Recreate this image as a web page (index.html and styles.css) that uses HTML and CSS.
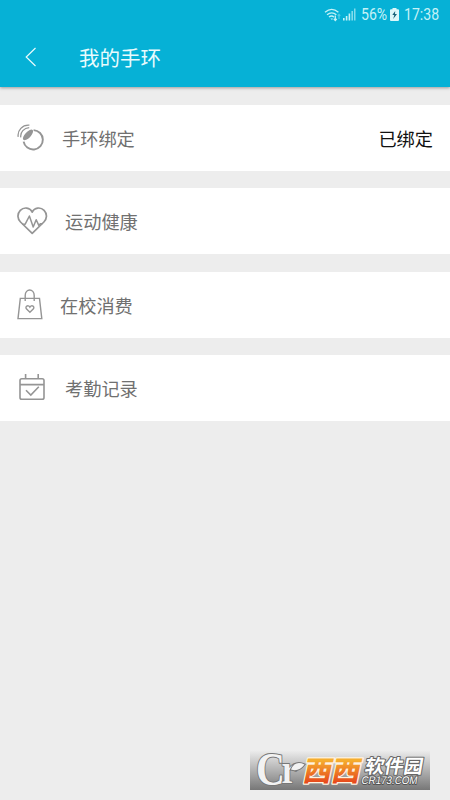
FILE: index.html
```html
<!DOCTYPE html>
<html lang="zh-CN">
<head>
<meta charset="utf-8">
<title>我的手环</title>
<link rel="stylesheet" href="styles.css">
</head>
<body>
<header class="header">
  <div class="status">
    <svg class="wifi" width="19" height="14" viewBox="0 0 19 14" fill="none" stroke="currentColor" stroke-width="1.3">
      <path d="M1 4.3Q7.7-1.5 14.4 4.3M3 6.8Q7.7 2.8 12.4 6.8M5 9.1Q7.7 6.9 10 9.1"/>
      <path d="M6.4 10.4L8 12l1-1.5z" fill="currentColor" stroke="none"/>
      <path d="M11.3 7.5v5M9.8 10.9l1.5 1.6 1.5-1.6"/>
      <path d="M15 11V6.5M13.7 7.8L15 6.5l1.3 1.3" opacity=".4"/>
    </svg>
    <svg class="signal" width="13" height="13" viewBox="0 0 13 13" fill="currentColor">
      <path d="M0 10h1.6v2.5H0zM2.8 8h1.6v4.5H2.8zM5.6 5.6h1.6v6.9H5.6z"/>
      <path d="M8.4 3H10v9.5H8.4zM11 .5h1.5v12H11z" opacity=".65"/>
    </svg>
    <span class="percent">56%</span>
    <svg class="battery" width="9" height="13" viewBox="0 0 9 13">
      <path d="M2.5 0h4v1.2H8q1 0 1 1V12q0 1-1 1H1q-1 0-1-1V2.2q0-1 1-1h1.5z" fill="#dcf7fa"/>
      <path d="M5.2 3L2.3 7h2L3.2 11 7 6H5z" fill="#17627a"/>
    </svg>
    <span class="time">17:38</span>
  </div>
  <div class="titlebar">
    <svg class="back" width="12" height="20" viewBox="0 0 12 20" fill="none" stroke="currentColor" stroke-width="1.2"><path d="M10.5 1L1.2 10l9.3 9"/></svg>
    <h1 class="title">我的手环</h1>
  </div>
</header>
<main class="list">
  <div class="row">
    <svg class="icon icon-band" width="28" height="28" viewBox="0 0 28 28" fill="none" stroke="currentColor">
      <path d="M16.6 6.1A9.7 9.7 0 1 1 6.6 17.6" stroke-width="1.9"/>
      <ellipse cx="11" cy="10.9" rx="2.9" ry="6.8" transform="rotate(43 11 10.9)" fill="currentColor" stroke="none"/>
      <path d="M1.2 12.8C.2 6.3 5.5.6 12.4 1.2M3.8 13.4C3 8 7.2 4 12.2 3.7" stroke-width="1.3"/>
    </svg>
    <span class="label">手环绑定</span>
    <span class="value">已绑定</span>
  </div>
  <div class="row">
    <svg class="icon icon-heart" width="31" height="28" viewBox="0 0 31 28" fill="none" stroke="currentColor" stroke-width="1.7" stroke-linejoin="round">
      <path d="M15.2 5.2C13 .2 6.8-.2 3.3 3.3-.2 7 .5 12 3.5 15L15.2 26.3 26.9 15C29.9 12 30.6 7 27.1 3.3 23.6-.2 17.4.2 15.2 5.2z"/>
      <path d="M5 17.2h3.2L12.4 9l3.8 11 3-7.2 2.6 5.6 1.6-1.6h2" stroke-width="1.5"/>
    </svg>
    <span class="label">运动健康</span>
  </div>
  <div class="row">
    <svg class="icon icon-bag" width="26" height="31" viewBox="0 0 26 31" fill="none" stroke="currentColor" stroke-width="1.4">
      <path d="M3.3 9.4h19.2l2.3 20.2H1z"/>
      <path d="M8.2 12V6.5C8.2-.8 17.2-.8 17.2 6.5V12"/>
      <path d="M12.9 23.2l-3.3-3.1c-2.1-2.4 1.5-5 3.3-2 1.8-3 5.4-.4 3.3 2z"/>
    </svg>
    <span class="label">在校消费</span>
  </div>
  <div class="row">
    <svg class="icon icon-calendar" width="27" height="27" viewBox="0 0 27 27" fill="none" stroke="currentColor" stroke-width="1.6">
      <rect x="1" y="4.7" width="24" height="20.6" rx="1.8"/>
      <path d="M1 10.6h24M6.6 0v4.7M19.2 0v4.7M7 16.3l4.8 4.7 8-8.2"/>
    </svg>
    <span class="label">考勤记录</span>
  </div>
</main>
<div class="watermark">
  <svg width="180" height="40" viewBox="0 0 180 40">
    <defs>
      <linearGradient id="orange" x1="0" y1="0" x2="0" y2="1"><stop offset=".3" stop-color="#f5ad2e"/><stop offset=".85" stop-color="#e6471b"/></linearGradient>
    </defs>
    <text class="mark" transform="translate(6 34.5) scale(.87 1)">C<tspan class="mark-r" dx="-4" dy="-1.5">r</tspan></text>
    <path class="leaf" d="M41 19.5Q45 10 54.5 14.5Q49 22 41 19.5z"/>
    <text class="brand" transform="translate(52 31) skewX(-12)" textLength="57" lengthAdjust="spacingAndGlyphs" fill="url(#orange)">西西</text>
    <text class="name" transform="translate(114 22.5) skewX(-10)" textLength="58" lengthAdjust="spacingAndGlyphs">软件园</text>
    <text class="site" transform="translate(111 33.5) skewX(-10)" textLength="56" lengthAdjust="spacingAndGlyphs">CR173.COM</text>
  </svg>
</div>
</body>
</html>
```
FILE: styles.css
```css
* { box-sizing: border-box; }
body {
  margin: 0;
  height: 800px;
  position: relative;
  overflow: hidden;
  background: #ededed;
  font-family: "Noto Sans CJK SC", sans-serif;
}
.header {
  height: 87px;
  background: #06b1d6;
  color: #e9fbfd;
  box-shadow: 0 1px 3px rgba(0, 0, 0, .35);
}
.status {
  height: 29px;
  padding-right: 11px;
  display: flex;
  align-items: center;
  justify-content: flex-end;
  font: 16px/29px Roboto, sans-serif;
  color: #c5f2f7;
}
.signal { margin-right: 5px; }
.percent { width: 26px; display: flex; transform: scaleX(.88); transform-origin: left; }
.battery { margin: 0 5px 0 3px; }
.time { width: 35px; transform: scaleX(.88); transform-origin: left; }
.titlebar {
  height: 55px;
  padding-left: 25px;
  display: flex;
  align-items: center;
}
.title {
  margin: 0 0 0 42px;
  font-size: 20.5px;
  line-height: 30px;
  font-weight: 400;
}
.list {
  padding-top: 18px;
  display: grid;
  grid-auto-rows: 66px;
  gap: 17.3px;
}
.row {
  padding: 0 17px;
  display: flex;
  align-items: center;
  background: #fff;
}
.icon { color: #959595; flex: none; }
.label { color: #707070; font-size: 18.2px; line-height: 28px; }
.value { margin-left: auto; color: #111; font-size: 18.2px; line-height: 28px; }
.icon-band { margin-right: 17px; }
.icon-heart { margin-right: 17px; }
.icon-bag { margin-right: 17px; }
.icon-calendar { margin: 0 19px 0 2px; }
.watermark {
  position: absolute;
  left: 250px;
  top: 750px;
  width: 180px;
  height: 40px;
  background: linear-gradient(#eee, #777);
}
.watermark svg { display: block; }
.watermark text { paint-order: stroke; stroke-linejoin: round; }
.mark, .leaf { fill: #f2f2f2; stroke: #777; stroke-width: 2px; paint-order: stroke; }
.mark { font: 700 46px "Liberation Serif", serif; }
.mark-r { font-size: 40px; }
.brand { font-size: 28px; font-weight: 900; stroke: #fff3e0; stroke-width: 2.5px; }
.name { font-size: 19px; font-weight: 700; fill: #fff; stroke: #666; stroke-width: 2px; }
.site { font: 400 11px "Liberation Sans", sans-serif; fill: #fff; stroke: #555; stroke-width: 1.8px; }
```
